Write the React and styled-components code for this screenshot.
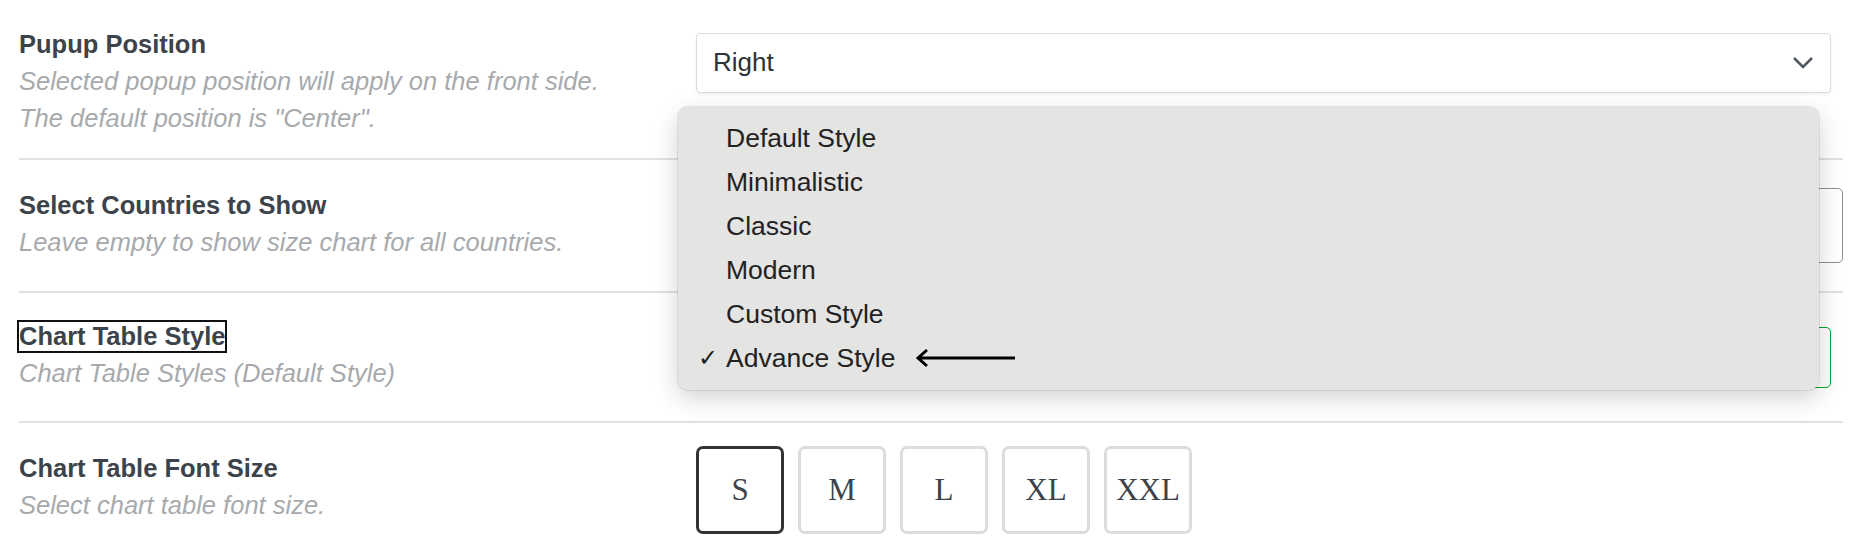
import React from "react";
import styled, { createGlobalStyle } from "styled-components";

const Global = createGlobalStyle`
  body { margin: 0; background: #fff; font-family: "Liberation Sans", Arial, sans-serif; }
`;
const Page = styled.div`position: relative; padding: 0 15px 0 19px; height: 554px; overflow: hidden;`;
const Row = styled.div`
  display: grid; grid-template-columns: 677px 1fr; align-items: center;
  height: ${p => p.h}px; border-bottom: ${p => (p.last ? "none" : "2px solid #e1e1e1")};
  box-sizing: border-box;
`;
const Info = styled.div`display: flex; flex-direction: column; gap: 4px;`;
const Label = styled.div`
  font-size: 25.5px; font-weight: 700; color: #3c434a; align-self: flex-start;
  ${p => p.boxed && "outline: 2px solid #111; outline-offset: 8px 4px;  box-shadow: 0 0 0 0 transparent; padding: 0; margin: 0;"}
`;
const Desc = styled.div`font-size: 25.5px; font-style: italic; color: #a7aaad; line-height: 37px;`;
const Select = styled.div`
  height: 58px; margin-right: 12px; border: 1px solid #dcdcde; border-radius: 4px;
  box-shadow: 0 2px 3px rgba(0,0,0,0.06); display: flex; align-items: center;
  justify-content: space-between; padding: 0 16px; font-size: 26px; color: #2c3338;
`;
const Partial = styled.div`
  height: ${p => p.h}px; border: 1px solid ${p => p.c}; border-radius: 5px;
`;
const Menu = styled.div`
  position: absolute; left: 678px; top: 107px; width: 1141px; height: 283px;
  background: #e4e4e3; border-radius: 10px; box-sizing: border-box;
  box-shadow: 0 8px 24px rgba(0,0,0,0.18), 0 0 0 1px rgba(0,0,0,0.08);
  padding: 10px 0; display: flex; flex-direction: column;
`;
const Item = styled.div`
  height: 44px; display: flex; align-items: center; font-size: 26.5px; color: #222;
  padding-left: 48px; position: relative;
`;
const Check = styled.span`position: absolute; left: 20px; font-size: 24px;`;
const Sizes = styled.div`display: flex; gap: 14px;`;
const SizeBtn = styled.div`
  width: 88px; height: 88px; box-sizing: border-box; border-radius: 7px;
  border: ${p => (p.active ? "3px solid #333" : "3px solid #dcdcde")};
  display: flex; align-items: center; justify-content: center;
  font-family: "Liberation Serif", "Times New Roman", serif; font-size: 31px; color: #3c434a;
`;

export default function App() {
  const items = ["Default Style", "Minimalistic", "Classic", "Modern", "Custom Style", "Advance Style"];
  return (
    <Page>
      <Global />
      <Row h={160}>
        <Info style={{ marginTop: 8 }}>
          <Label>Pupup Position</Label>
          <Desc>Selected popup position will apply on the front side.<br />The default position is "Center".</Desc>
        </Info>
        <Select style={{ marginTop: -33 }}>
          Right
          <svg width="22" height="14" viewBox="0 0 22 14"><path d="M2 2l9 9 9-9" fill="none" stroke="#50575e" strokeWidth="2.6" /></svg>
        </Select>
      </Row>
      <Row h={133}>
        <Info><Label>Select Countries to Show</Label><Desc>Leave empty to show size chart for all countries.</Desc></Info>
        <Partial h={73} c="#8c8f94" />
      </Row>
      <Row h={130}>
        <Info><Label boxed>Chart Table Style</Label><Desc>Chart Table Styles (Default Style)</Desc></Info>
        <Partial h={59} c="#00a32a" style={{ marginRight: 12 }} />
      </Row>
      <Row h={131} last>
        <Info><Label>Chart Table Font Size</Label><Desc>Select chart table font size.</Desc></Info>
        <Sizes style={{ marginTop: 2 }}>
          {["S", "M", "L", "XL", "XXL"].map((s, i) => <SizeBtn key={s} active={i === 0}>{s}</SizeBtn>)}
        </Sizes>
      </Row>
      <Menu>
        {items.map((t, i) => (
          <Item key={t}>
            {i === 5 && <Check>✓</Check>}
            {t}
            {i === 5 && (
              <svg width="104" height="20" viewBox="0 0 104 20" style={{ marginLeft: 18 }}>
                <path d="M102 10H6M14 2L5 10l9 8" fill="none" stroke="#000" strokeWidth="3" />
              </svg>
            )}
          </Item>
        ))}
      </Menu>
    </Page>
  );
}
